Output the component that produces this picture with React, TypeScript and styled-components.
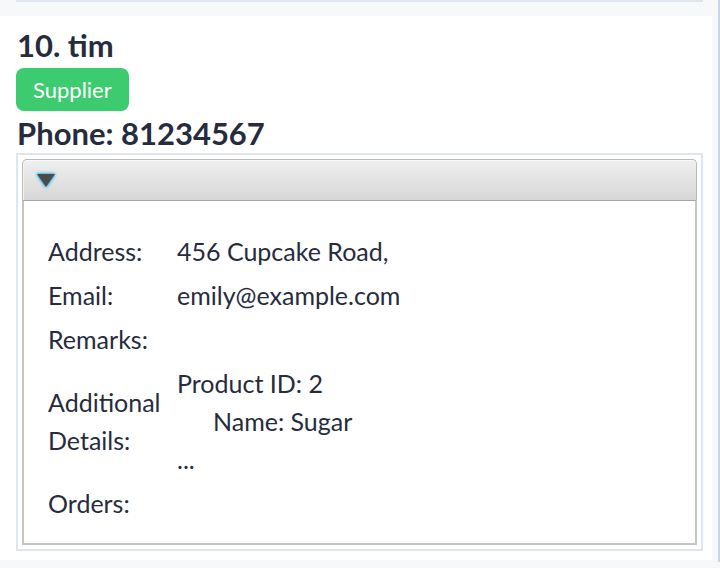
import React from "react";
import styled, { createGlobalStyle } from "styled-components";

const Global = createGlobalStyle`
  html, body { margin: 0; padding: 0; background: #f6f8fa; }
  body { font-family: "Lato", "Noto Sans", sans-serif; color: #262c3d; }
`;

const Page = styled.div`
  display: flex;
  width: 720px;
  height: 568px;
  overflow: hidden;
  background: #f6f8fa;
`;

const ListColumn = styled.div`
  width: 712px;
  display: flex;
  flex-direction: column;
`;

const Gutter = styled.div`
  width: 6px;
`;

const ScrollTrack = styled.div`
  width: 2px;
  height: 562px;
  background: #c8d5e4;
`;

const PrevTail = styled.div`
  height: 16px;
  padding-left: 16px;
  box-sizing: border-box;
`;

const PrevBorder = styled.div`
  width: 687px;
  height: 2px;
  background: #dfe6ee;
`;

const Card = styled.div`
  background: #ffffff;
  padding: 10px 9px 9px 16px;
  display: flex;
  flex-direction: column;
`;

const Heading = styled.div`
  font-weight: 700;
  font-size: 31px;
  line-height: 38px;
  padding-left: 1px;
`;

const Badge = styled.span`
  align-self: flex-start;
  background: #3ccc6f;
  color: #ffffff;
  border-radius: 8px;
  font-size: 22px;
  line-height: 43px;
  height: 43px;
  padding: 0 17px;
  margin: 4px 0 3px;
`;

const OuterBox = styled.div`
  margin-top: 1px;
  border: 2px solid #dfe6ee;
  padding: 4px 4px 4px 4px;
`;

const Pane = styled.div`
  display: flex;
  flex-direction: column;
`;

const TitleBar = styled.div`
  height: 41px;
  box-sizing: border-box;
  border: 1px solid #b9b9b9;
  border-bottom: none;
  border-radius: 5px 5px 0 0;
  background: linear-gradient(#efefef, #d7d7d7);
  box-shadow: inset 0 1px 0 #f9f9f9, inset 1px 0 0 #f4f4f4;
  display: flex;
  align-items: center;
  padding-left: 13px;
`;

const Arrow = styled.svg`
  width: 20px;
  height: 16px;
  filter: drop-shadow(0 0 1.5px #2bb6f0) drop-shadow(0 0 1px #39b8f0);
`;

const Body = styled.div`
  border: 2px solid #c4c4c4;
  border-top: 1px solid #a6a6a6;
  background: #ffffff;
  padding: 31px 24px 21px 24px;
  display: grid;
  grid-template-columns: 129px 1fr;
  row-gap: 6px;
  font-size: 25px;
  line-height: 38px;
`;

const Label = styled.div`
  align-self: center;
`;

const Value = styled.div`
  align-self: center;
  min-height: 38px;
`;

const Line = styled.div<{ $indent?: number }>`
  padding-left: ${(p) => p.$indent ?? 0}px;
`;

export default function App() {
  return (
    <>
      <Global />
      <Page>
        <ListColumn>
          <PrevTail>
            <PrevBorder />
          </PrevTail>
          <Card>
            <Heading>10. tim</Heading>
            <Badge>Supplier</Badge>
            <Heading>Phone: 81234567</Heading>
            <OuterBox>
              <Pane>
                <TitleBar>
                  <Arrow viewBox="0 0 20 16">
                    <polygon points="1,2 19,2 10,15" fill="#4b4b4b" />
                  </Arrow>
                </TitleBar>
                <Body>
                  <Label>Address:</Label>
                  <Value>456 Cupcake Road,</Value>
                  <Label>Email:</Label>
                  <Value>emily@example.com</Value>
                  <Label>Remarks:</Label>
                  <Value></Value>
                  <Label>
                    Additional
                    <br />
                    Details:
                  </Label>
                  <Value>
                    <Line>Product ID: 2</Line>
                    <Line $indent={36}>Name: Sugar</Line>
                    <Line>...</Line>
                  </Value>
                  <Label>Orders:</Label>
                  <Value></Value>
                </Body>
              </Pane>
            </OuterBox>
          </Card>
        </ListColumn>
        <Gutter />
        <ScrollTrack />
      </Page>
    </>
  );
}
